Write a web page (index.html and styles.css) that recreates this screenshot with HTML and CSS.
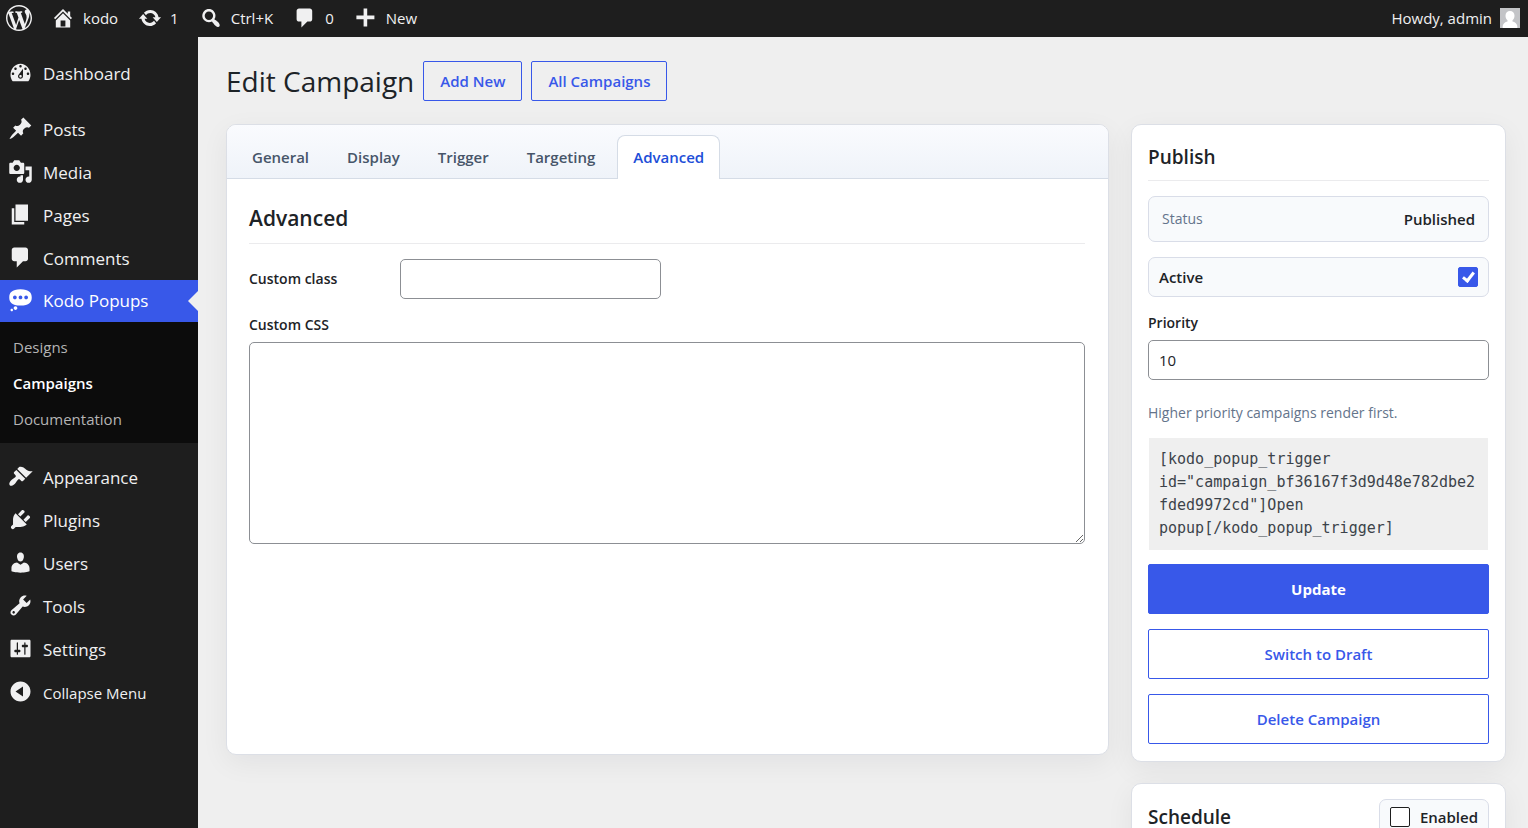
FILE: index.html
```
<!DOCTYPE html>
<html lang="en">
<head>
    <meta charset="UTF-8">
    <meta name="viewport" content="width=device-width, initial-scale=1.0">
    <title>Edit Campaign</title>
    <link rel="stylesheet" href="styles.css">
</head>
<body>

<header class="adminbar">
    <a href="#" class="bar-item bar-logo" aria-label="About WordPress"><svg class="logo" viewBox="0 0 20 20"><path d="M20 10c0-5.51-4.49-10-10-10C4.48 0 0 4.49 0 10c0 5.52 4.48 10 10 10 5.51 0 10-4.48 10-10zM7.78 15.37L4.37 6.22c.55-.02 1.17-.08 1.17-.08.5-.06.44-1.13-.06-1.11 0 0-1.45.11-2.37.11-.18 0-.37 0-.58-.01C4.12 2.69 6.87 1.11 10 1.11c2.33 0 4.45.87 6.05 2.34-.68-.11-1.65.39-1.65 1.58 0 .74.45 1.36.9 2.1.35.61.55 1.36.55 2.46 0 1.49-1.4 5-1.4 5l-3.03-8.37c.54-.02.82-.17.82-.17.5-.05.44-1.25-.06-1.22 0 0-1.44.12-2.38.12-.87 0-2.33-.12-2.33-.12-.5-.03-.56 1.2-.06 1.22l.92.08 1.26 3.41zM17.41 10c.24-.64.74-1.87.43-4.25.7 1.29 1.05 2.71 1.05 4.25 0 3.29-1.73 6.24-4.4 7.78.97-2.59 1.94-5.2 2.92-7.78zM6.1 18.09C3.12 16.65 1.11 13.53 1.11 10c0-1.3.23-2.48.72-3.59C3.25 10.3 4.67 14.2 6.1 18.09zm4.03-6.63l2.58 6.98c-.86.29-1.76.45-2.71.45-.79 0-1.57-.11-2.29-.33.81-2.38 1.62-4.74 2.42-7.1z"/></svg></a>
    <a href="#" class="bar-item"><svg viewBox="0 0 20 20"><path d="M16 8.5l1.53 1.53-1.06 1.06L10 4.6l-6.47 6.49-1.06-1.06L10 2.5l4 4v-2h2v4zm-6-2.46l6 5.99V18H4v-5.97zM12 17v-5H8v5h4z"/></svg>kodo</a>
    <a href="#" class="bar-item"><svg viewBox="0 0 20 20"><path d="M10.2 3.28c3.53 0 6.43 2.61 6.92 6h2.08l-3.5 4-3.5-4h2.32c-.45-1.97-2.21-3.45-4.32-3.45-1.45 0-2.73.71-3.54 1.78L4.95 5.66C6.23 4.2 8.11 3.28 10.2 3.28zm-.4 13.44c-3.52 0-6.43-2.61-6.92-6H.8l3.5-4c1.17 1.33 2.33 2.67 3.5 4H5.48c.45 1.97 2.21 3.45 4.32 3.45 1.45 0 2.73-.71 3.54-1.78l1.71 1.95c-1.28 1.46-3.15 2.38-5.25 2.38z"/></svg>1</a>
    <a href="#" class="bar-item"><svg viewBox="0 0 20 20"><path d="M12.14 4.18c1.87 1.87 2.11 4.75.72 6.89.12.1.22.21.36.31.2.16.47.36.81.59.34.24.56.39.66.47.42.31.73.57.94.78.32.32.6.65.84 1 .25.35.44.69.59 1.04.14.35.21.68.18 1-.02.32-.14.59-.36.81s-.49.34-.81.36c-.31.02-.65-.04-.99-.19-.35-.14-.7-.34-1.04-.59-.35-.24-.68-.52-1-.84-.21-.21-.47-.52-.77-.93-.1-.13-.25-.35-.47-.66-.22-.32-.4-.57-.56-.78-.16-.2-.29-.35-.44-.5-2.07 1.09-4.69.76-6.44-.98-2.14-2.15-2.14-5.64 0-7.78 2.15-2.15 5.63-2.15 7.78 0zm-1.41 6.36c1.36-1.37 1.36-3.58 0-4.95-1.37-1.37-3.59-1.37-4.95 0-1.37 1.37-1.37 3.58 0 4.95 1.36 1.37 3.58 1.37 4.95 0z"/></svg>Ctrl+K</a>
    <a href="#" class="bar-item"><svg viewBox="0 0 20 20"><path d="M5 2h9c1.1 0 2 .9 2 2v7c0 1.1-.9 2-2 2h-2l-5 5v-5H5c-1.1 0-2-.9-2-2V4c0-1.1.9-2 2-2z"/></svg>0</a>
    <a href="#" class="bar-item"><svg viewBox="0 0 20 20"><path d="M17 8v3h-6v6H8v-6H2V8h6V2h3v6z"/></svg>New</a>
    <a href="#" class="bar-item bar-user">Howdy, admin
        <svg class="avatar" viewBox="0 0 20 20"><rect class="avatar-bg" width="20" height="20"/><path d="M10 3c2.6 0 4.5 1.9 4.5 4.7 0 1.9-.9 3.7-2 4.6v1.2c2.5.6 4.2 2 4.8 4.5V20H2.7v-2c.6-2.5 2.3-3.9 4.8-4.5v-1.2c-1.1-.9-2-2.7-2-4.6C5.5 4.9 7.4 3 10 3z"/></svg>
    </a>
</header>

<div class="layout">
    <nav class="sidebar">
        <a href="#" class="menu-item"><svg viewBox="0 0 20 20"><path d="M3.76 17h12.48c1.1-1.37 1.76-3.11 1.76-5 0-4.98-3.58-9-8-9s-8 4.02-8 9c0 1.89.66 3.63 1.76 5zM10 4c.55 0 1 .45 1 1s-.45 1-1 1-1-.45-1-1 .45-1 1-1zM6 6c.55 0 1 .45 1 1s-.45 1-1 1-1-.45-1-1 .45-1 1-1zm8 0c.55 0 1 .45 1 1s-.45 1-1 1-1-.45-1-1 .45-1 1-1zm-5.37 5.55L12 7v6c0 1.1-.9 2-2 2s-2-.9-2-2c0-.57.24-1.08.63-1.45zM4 10c.55 0 1 .45 1 1s-.45 1-1 1-1-.45-1-1 .45-1 1-1zm12 0c.55 0 1 .45 1 1s-.45 1-1 1-1-.45-1-1 .45-1 1-1zm-5 3c0-.55-.45-1-1-1s-1 .45-1 1 .45 1 1 1 1-.45 1-1z"/></svg>Dashboard</a>
        <div class="separator"></div>
        <a href="#" class="menu-item"><svg viewBox="0 0 20 20"><path d="M10.44 3.02l1.82-1.82 6.36 6.35-1.83 1.82c-1.05-.68-2.48-.57-3.41.36l-.75.75c-.92.93-1.04 2.35-.35 3.41l-1.83 1.82-2.41-2.41-2.8 2.79c-.42.42-3.38 2.71-3.8 2.29s1.86-3.39 2.28-3.81l2.79-2.79L4.1 9.36l1.83-1.82c1.05.69 2.48.57 3.4-.36l.75-.75c.93-.92 1.05-2.35.36-3.41z"/></svg>Posts</a>
        <a href="#" class="menu-item"><svg viewBox="0 0 20 20"><path d="M13 11V4c0-.55-.45-1-1-1h-1.67L9 1H5L3.67 3H2c-.55 0-1 .45-1 1v7c0 .55.45 1 1 1h10c.55 0 1-.45 1-1zM7 4.5c1.38 0 2.5 1.12 2.5 2.5S8.38 9.5 7 9.5 4.5 8.38 4.5 7 5.62 4.5 7 4.5zM14 6h5v10.5c0 1.38-1.12 2.5-2.5 2.5S14 17.88 14 16.5s1.12-2.5 2.5-2.5c.17 0 .34.02.5.05V9h-3V6zm-4 8.05V13h2v3.5c0 1.38-1.12 2.5-2.5 2.5S7 17.88 7 16.5 8.12 14 9.5 14c.17 0 .34.02.5.05z"/></svg>Media</a>
        <a href="#" class="menu-item"><svg viewBox="0 0 20 20"><path d="M6 15V2h10v13H6zm-1 1h8v2H3V5h2v11z"/></svg>Pages</a>
        <a href="#" class="menu-item"><svg viewBox="0 0 20 20"><path d="M5 2h9c1.1 0 2 .9 2 2v7c0 1.1-.9 2-2 2h-2l-5 5v-5H5c-1.1 0-2-.9-2-2V4c0-1.1.9-2 2-2z"/></svg>Comments</a>
        <a href="#" class="menu-item current"><svg viewBox="0 0 20 20"><path d="M10 1c7 0 9 2.91 9 6.5S17 14 10 14s-9-2.91-9-6.5S3 1 10 1zM5.5 9C6.33 9 7 8.33 7 7.5S6.33 6 5.5 6 4 6.67 4 7.5 4.67 9 5.5 9zM10 9c.83 0 1.5-.67 1.5-1.5S10.83 6 10 6s-1.5.67-1.5 1.5S9.17 9 10 9zm4.5 0c.83 0 1.5-.67 1.5-1.5S15.33 6 14.5 6 13 6.67 13 7.5 13.67 9 14.5 9zM6 14.5c.83 0 1.5.67 1.5 1.5s-.67 1.5-1.5 1.5-1.5-.67-1.5-1.5.67-1.5 1.5-1.5zm-3 2c.55 0 1 .45 1 1s-.45 1-1 1-1-.45-1-1 .45-1 1-1z"/></svg>Kodo Popups</a>
        <div class="submenu">
            <a href="#">Designs</a>
            <a href="#" class="active">Campaigns</a>
            <a href="#">Documentation</a>
        </div>
        <a href="#" class="menu-item"><svg viewBox="0 0 20 20"><path d="M14.48 11.06L7.41 3.99l1.5-1.5c.5-.56 2.3-.47 3.51.32 1.21.8 1.43 1.28 2.91 2.1 1.18.64 2.45 1.26 4.45.85zm-.71.71L6.7 4.7 4.93 6.47c-.39.39-.39 1.02 0 1.41l1.06 1.06c.39.39.39 1.03 0 1.42-.6.6-1.43 1.11-2.21 1.69-.35.26-.7.53-1.01.84C1.43 14.23.4 16.08 1.4 17.07c.99 1 2.84-.03 4.18-1.36.31-.31.58-.66.85-1.02.57-.78 1.08-1.61 1.69-2.21.39-.39 1.02-.39 1.41 0l1.06 1.06c.39.39 1.02.39 1.41 0z"/></svg>Appearance</a>
        <a href="#" class="menu-item"><svg viewBox="0 0 20 20"><path d="M13.11 4.36L9.87 7.6 8 5.73l3.24-3.24c.35-.34 1.05-.2 1.56.32.52.51.66 1.21.31 1.55zm-8 1.77l.91-1.12 9.01 9.01-1.19.84c-.71.71-2.63 1.16-3.82 1.16H6.14L4.9 17.26c-.59.59-1.54.59-2.12 0-.59-.58-.59-1.53 0-2.12l1.24-1.24v-3.88c0-1.13.4-3.19 1.09-3.89zm7.26 3.97l3.24-3.24c.34-.35 1.04-.21 1.55.31.52.51.66 1.21.31 1.55l-3.24 3.25z"/></svg>Plugins</a>
        <a href="#" class="menu-item"><svg viewBox="0 0 20 20"><path d="M10 9.25c-2.27 0-2.73-3.44-2.73-3.44C7 4.02 7.82 2 9.97 2c2.16 0 2.98 2.02 2.71 3.81 0 0-.41 3.44-2.68 3.44zm0 2.57L12.72 10c2.39 0 4.52 2.33 4.52 4.53v2.49s-3.65 1.13-7.24 1.13c-3.65 0-7.24-1.13-7.24-1.13v-2.49c0-2.25 1.94-4.48 4.47-4.48z"/></svg>Users</a>
        <a href="#" class="menu-item"><svg viewBox="0 0 20 20"><path d="M16.68 9.77c-1.34 1.34-3.3 1.67-4.95.99l-5.41 6.52c-.99.99-2.59.99-3.58 0s-.99-2.59 0-3.57l6.52-5.42c-.68-1.65-.35-3.61.99-4.95 1.28-1.28 3.12-1.62 4.72-1.06l-2.89 2.89 2.82 2.82 2.86-2.87c.53 1.58.18 3.39-1.08 4.65zM3.81 16.21c.4.39 1.04.39 1.43 0 .4-.4.4-1.04 0-1.43-.39-.4-1.03-.4-1.43 0-.39.39-.39 1.03 0 1.43z"/></svg>Tools</a>
        <a href="#" class="menu-item"><svg viewBox="0 0 20 20"><path d="M18 16V4c0-.55-.45-1-1-1H3c-.55 0-1 .45-1 1v12c0 .55.45 1 1 1h14c.55 0 1-.45 1-1zM8 11h1c.55 0 1 .45 1 1s-.45 1-1 1H8v1.5c0 .28-.22.5-.5.5s-.5-.22-.5-.5V13H6c-.55 0-1-.45-1-1s.45-1 1-1h1V5.5c0-.28.22-.5.5-.5s.5.22.5.5V11zm5-2h-1c-.55 0-1-.45-1-1s.45-1 1-1h1V5.5c0-.28.22-.5.5-.5s.5.22.5.5V7h1c.55 0 1 .45 1 1s-.45 1-1 1h-1v5.5c0 .28-.22.5-.5.5s-.5-.22-.5-.5V9z"/></svg>Settings</a>
        <button type="button" class="menu-item collapse"><svg viewBox="0 0 20 20"><path d="M10 2c4.42 0 8 3.58 8 8s-3.58 8-8 8-8-3.58-8-8 3.58-8 8-8zm2 12V6l-6 4z"/></svg>Collapse Menu</button>
    </nav>

    <main class="content">
        <div class="page-head">
            <h1>Edit Campaign</h1>
            <a href="#" class="btn">Add New</a>
            <a href="#" class="btn">All Campaigns</a>
        </div>

        <div class="columns">
            <section class="card editor">
                <div class="tabs">
                    <a href="#" class="tab">General</a>
                    <a href="#" class="tab">Display</a>
                    <a href="#" class="tab">Trigger</a>
                    <a href="#" class="tab">Targeting</a>
                    <a href="#" class="tab active">Advanced</a>
                </div>
                <div class="editor-body">
                    <h2>Advanced</h2>
                    <div class="field-row">
                        <label for="customClass">Custom class</label>
                        <input type="text" id="customClass">
                    </div>
                    <label for="customCss">Custom CSS</label>
                    <textarea id="customCss"></textarea>
                </div>
            </section>

            <aside class="side">
                <section class="card panel">
                    <h2>Publish</h2>
                    <div class="box status">
                        <span class="muted">Status</span>
                        <strong>Published</strong>
                    </div>
                    <label class="box toggle">Active <input type="checkbox" checked></label>
                    <label for="priority">Priority</label>
                    <input type="number" id="priority" value="10">
                    <p class="hint">Higher priority campaigns render first.</p>
                    <code class="shortcode">[kodo_popup_trigger id="campaign_bf36167f3d9d48e782dbe2fded9972cd"]Open popup[/kodo_popup_trigger]</code>
                    <div class="actions">
                        <button type="button" class="btn primary">Update</button>
                        <button type="button" class="btn">Switch to Draft</button>
                        <button type="button" class="btn">Delete Campaign</button>
                    </div>
                </section>

                <section class="card panel schedule">
                    <h2>Schedule</h2>
                    <label class="box enabled"><input type="checkbox"> Enabled</label>
                </section>
            </aside>
        </div>
    </main>
</div>

</body>
</html>
```
FILE: styles.css
```
* {
    box-sizing: border-box;
}

body {
    margin: 0;
    min-height: 100vh;
    display: flex;
    flex-direction: column;
    background: #efefef;
    color: #1d2327;
    font-family: "Open Sans", sans-serif;
    font-size: 15px;
    line-height: 20px;
}

a {
    text-decoration: none;
}

button, input, textarea {
    font-family: inherit;
    font-size: 15px;
}

svg {
    width: 24px;
    height: 24px;
    flex: none;
    fill: #f0f0f1;
    fill-rule: evenodd;
}

/* Top admin bar */
.adminbar {
    display: flex;
    align-items: center;
    height: 37px;
    padding: 0 8px 2px 6px;
    gap: 20px;
    background: #1e1e1e;
}

.bar-item {
    display: flex;
    align-items: center;
    gap: 8px;
    color: #f0f0f1;
}

.bar-logo {
    margin-right: -1px;
}

.logo {
    width: 26px;
    height: 26px;
}

.bar-user {
    margin-left: auto;
}

.avatar {
    width: 20px;
    height: 20px;
    fill: #fff;
}

.avatar-bg {
    fill: #c3c4c7;
}

/* Left menu */
.layout {
    display: flex;
    flex: 1;
}

.sidebar {
    width: 198px;
    flex: none;
    padding-top: 15px;
    background: #1e1e1e;
}

.menu-item {
    display: flex;
    align-items: center;
    gap: 10px;
    width: 100%;
    height: 43px;
    padding: 0 8px;
    color: #f0f0f1;
    font-size: 17px;
    position: relative;
}

.menu-item svg {
    width: 25px;
    height: 25px;
    margin-bottom: 2px;
}

.menu-item.current {
    height: 42px;
    background: #3858e9;
    color: #fff;
}

.menu-item.current svg {
    fill: #fff;
}

.menu-item.current::after {
    content: "";
    position: absolute;
    right: 0;
    top: 11px;
    border: 10px solid transparent;
    border-left: 0;
    border-right-color: #efefef;
}

.separator {
    height: 13px;
}

.submenu {
    padding: 7px 0 6px;
    margin-bottom: 13px;
    background: #0c0c0c;
}

.submenu a {
    display: block;
    padding: 0 13px;
    line-height: 36px;
    color: #b4b4b4;
}

.submenu .active {
    color: #fff;
    font-weight: 600;
}

.collapse {
    background: none;
    border: 0;
    font-size: 15px;
    cursor: pointer;
}

/* Main area */
.content {
    flex: 1;
    min-width: 0;
    padding: 24px 22px 24px 28px;
}

.page-head {
    display: flex;
    align-items: center;
    gap: 9px;
    margin-bottom: 23px;
}

h1 {
    margin: 0;
    font-size: 28px;
    font-weight: 400;
    line-height: 40px;
}

h2 {
    margin: 0 0 15px;
    padding-bottom: 11px;
    border-bottom: 1px solid #ebebed;
    font-size: 19px;
    font-weight: 600;
    line-height: 24px;
}

.btn {
    display: block;
    padding: 0 16px;
    border: 1px solid #3858e9;
    border-radius: 2px;
    background: none;
    color: #3858e9;
    font-weight: 600;
    line-height: 38px;
    text-align: center;
    cursor: pointer;
}

.columns {
    display: grid;
    grid-template-columns: minmax(0, 1fr) 375px;
    gap: 22px;
    align-items: start;
}

.card {
    background: #fff;
    border: 1px solid #dcdfe6;
    border-radius: 10px;
    box-shadow: 0 8px 28px rgba(15, 23, 42, 0.06);
}

.editor {
    min-height: 631px;
}

.tabs {
    display: flex;
    gap: 6px;
    padding: 10px 9px 0;
    border-bottom: 1px solid #d5dce6;
    border-radius: 9px 9px 0 0;
    background: linear-gradient(#fafbfe, #eff3f9);
}

.tab {
    padding: 0 15px;
    margin-bottom: -1px;
    border: 1px solid transparent;
    border-bottom: 0;
    border-radius: 8px 8px 0 0;
    color: #475569;
    font-weight: 600;
    line-height: 43px;
}

.tab.active {
    background: #fff;
    border-color: #d5dce6;
    color: #1d4ed8;
}

.editor-body {
    padding: 27px 23px 23px 22px;
}

.editor-body h2 {
    padding-bottom: 13px;
    font-size: 21px;
}

label {
    font-size: 14px;
    font-weight: 600;
}

input[type="text"], input[type="number"], textarea {
    border: 1px solid #8c8f94;
    border-radius: 5px;
    background: #fff;
    color: #1d2327;
}

input[type="text"], input[type="number"] {
    height: 40px;
    padding: 0 10px;
}

input[type="number"] {
    appearance: textfield;
    width: 100%;
    margin: 7px 0 23px;
}

.field-row {
    display: flex;
    align-items: center;
    margin-bottom: 15px;
}

.field-row label {
    width: 151px;
}

.field-row input {
    width: 261px;
}

textarea {
    display: block;
    width: 100%;
    height: 202px;
    margin-top: 7px;
}

/* Right column */
.side {
    display: grid;
    gap: 21px;
}

.panel {
    padding: 20px 16px 17px;
}

.box {
    display: flex;
    align-items: center;
    justify-content: space-between;
    height: 40px;
    padding: 0 10px;
    border: 1px solid #d9dde8;
    border-radius: 7px;
    background: #f8fafc;
    font-size: 15px;
}

.status {
    height: 46px;
    padding: 0 13px;
}

.status strong {
    font-weight: 600;
}

.muted {
    color: #64748b;
    font-size: 14px;
}

.toggle {
    margin: 15px 0;
}

input[type="checkbox"] {
    appearance: none;
    width: 20px;
    height: 20px;
    margin: 0;
    border: 1px solid #1e1e1e;
    border-radius: 2px;
    background: #fff;
    position: relative;
}

input[type="checkbox"]:checked {
    border-color: #3858e9;
    background: #3858e9;
}

input[type="checkbox"]:checked::after {
    content: "";
    position: absolute;
    left: 6px;
    top: 2px;
    width: 4px;
    height: 9px;
    border: solid #fff;
    border-width: 0 3px 3px 0;
    transform: rotate(38deg);
}

.hint {
    margin: 0 0 15px;
    color: #64748b;
    font-size: 14px;
}

.shortcode {
    display: block;
    margin: 0 1px 14px;
    padding: 10px;
    background: #efefef;
    color: #3c434a;
    font-family: "DejaVu Sans Mono", monospace;
    font-size: 15px;
    line-height: 23px;
    word-break: break-word;
}

.actions {
    display: grid;
    gap: 15px;
}

.actions .btn {
    line-height: 48px;
}

.actions .primary {
    background: #3858e9;
    color: #fff;
    font-weight: 700;
}

.schedule {
    display: flex;
    justify-content: space-between;
    align-items: center;
    padding: 15px 16px 16px;
}

.schedule h2 {
    margin: 0;
    padding: 0;
    border: 0;
}

.enabled {
    gap: 10px;
    height: 36px;
}
```
